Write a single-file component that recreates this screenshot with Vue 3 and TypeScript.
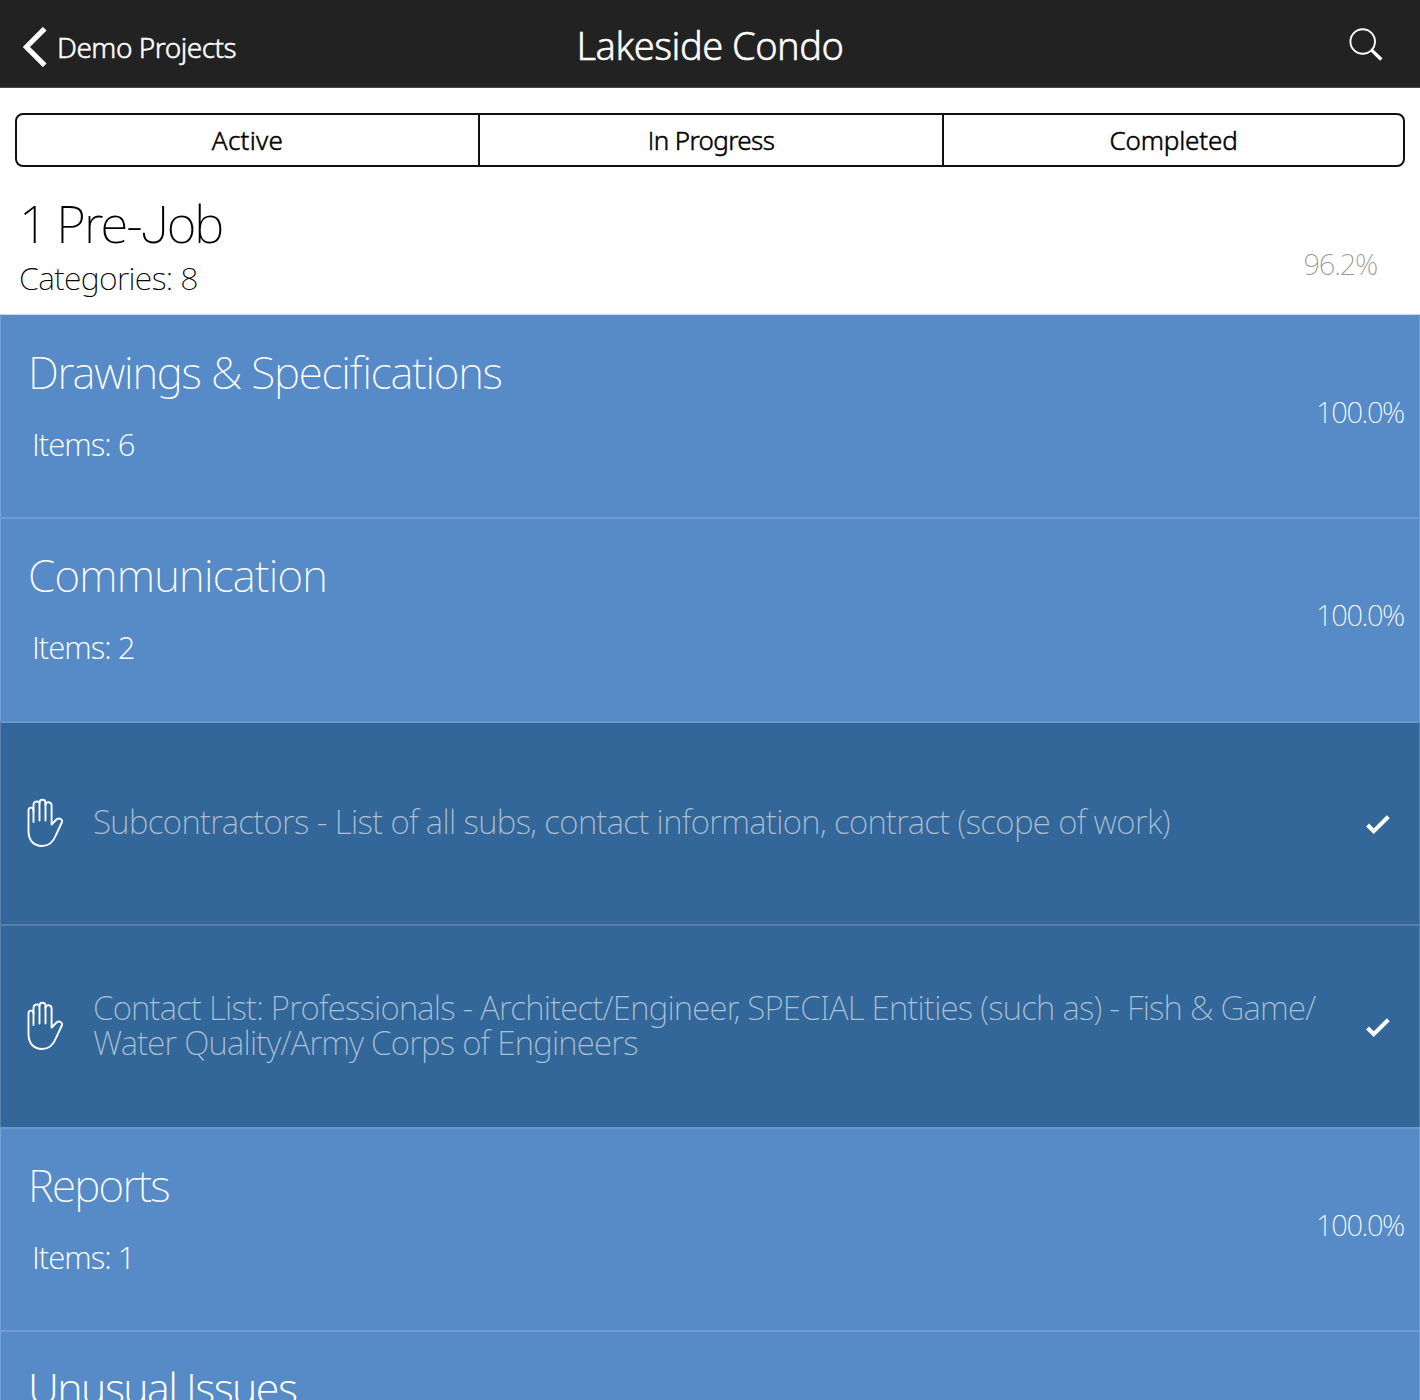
<script setup lang="ts">
interface Category { kind: 'category'; title: string; items?: number; percent?: string; cls: string }
interface Task { kind: 'task'; lines: string[]; cls: string }

const rows: (Category | Task)[] = [
  { kind: 'category', title: 'Drawings & Specifications', items: 6, percent: '100.0%', cls: 'drawings' },
  { kind: 'category', title: 'Communication', items: 2, percent: '100.0%', cls: 'communication' },
  { kind: 'task', lines: ['Subcontractors - List of all subs, contact information, contract (scope of work)'], cls: 'subs' },
  {
    kind: 'task',
    lines: [
      'Contact List: Professionals - Architect/Engineer, SPECIAL Entities (such as) - Fish & Game/',
      'Water Quality/Army Corps of Engineers',
    ],
    cls: 'contacts',
  },
  { kind: 'category', title: 'Reports', items: 1, percent: '100.0%', cls: 'reports' },
  { kind: 'category', title: 'Unusual Issues', cls: 'issues' },
]
</script>

<template>
  <div class="screen">
    <header class="bar">
      <a class="back">
        <svg width="24" height="40" viewBox="0 0 24 40"><path d="M21.7 1.7 3.4 20 21.7 38.3" fill="none" stroke="#fff" stroke-width="5.2" /></svg>
        <span>Demo Projects</span>
      </a>
      <h1>Lakeside Condo</h1>
      <svg class="search" width="36" height="36" viewBox="0 0 36 36">
        <circle cx="14.7" cy="14.5" r="12.3" fill="none" stroke="#fff" stroke-width="1.9" />
        <path d="M23.6 23.1 33.3 32.5" stroke="#fff" stroke-width="3.4" />
      </svg>
    </header>

    <nav class="tabs">
      <button class="active">Active</button>
      <button class="progress"><span class="plain">I</span>n Progress</button>
      <button class="completed">Completed</button>
    </nav>

    <section class="phase">
      <div>
        <h2>1 Pre-<span class="jay">J</span>ob</h2>
        <p>Categories: 8</p>
      </div>
      <span class="total">96.2%</span>
    </section>

    <ul class="list">
      <li v-for="(row, i) in rows" :key="i" :class="['row', row.kind, row.cls]">
        <template v-if="row.kind === 'category'">
          <div>
            <h3>{{ row.title }}</h3>
            <p v-if="row.items">Items: {{ row.items }}</p>
          </div>
          <span v-if="row.percent" class="percent">{{ row.percent }}</span>
        </template>
        <template v-else>
          <svg class="hand" width="38" height="50" viewBox="0 0 38 50" fill="none" stroke="#fff" stroke-width="1.9" stroke-linecap="round" stroke-linejoin="round">
            <path d="M7.5 24V12.500C7.500 8.300 2.500 9 2.500 12.500V33C2.500 43 8.500 48 16 48C23.500 48 27.500 43.500 30 37L35.800 24.500C37 21.200 33 19.500 30.500 21.500L25.600 26.500V7.500C25.600 3.300 19.500 3.300 19.500 6.500V22.500" />
            <path d="M13.500 22.500V5.500C13.500 2.500 7.500 2.500 7.500 7V13" />
            <path d="M13.500 5C13.500 .6 19.500 .6 19.500 5V7" />
          </svg>
          <p class="text"><span v-for="line in row.lines" :key="line">{{ line }}</span></p>
          <svg class="check" width="26" height="22" viewBox="0 0 26 22"><path d="M2.600 11 8.700 17.200 23.300 2.800" fill="none" stroke="#fff" stroke-width="4.100" /></svg>
        </template>
      </li>
    </ul>
  </div>
</template>

<style>
body { margin: 0; background: #fff; }
</style>

<style scoped>
.screen {
  width: 1420px;
  height: 1400px;
  overflow: hidden;
  background: #fff;
  font-family: "Noto Sans", "Open Sans", sans-serif;
  font-feature-settings: "liga" 1;
}
h1, h2, h3, p, ul { margin: 0; padding: 0; font-weight: inherit; }
.plain { font-family: "Open Sans", sans-serif; }
.jay { font-family: Roboto, sans-serif; font-weight: 200; }

.bar {
  display: grid;
  grid-template-columns: 1fr auto 1fr;
  align-items: start;
  box-sizing: border-box;
  height: 88px;
  padding: 0 22px;
  background: #222;
  border-bottom: 1px solid #4a4a4a;
  color: #fff;
  font-weight: 300;
  -webkit-text-stroke: 0.5px currentColor;
}
.back { display: flex; gap: 10px; padding: 27px 0 0 1px; white-space: nowrap; }
.back span { font-size: 28px; line-height: 40px; letter-spacing: -0.5px; }
h1 { padding-top: 20px; font-size: 38px; line-height: 50px; letter-spacing: -0.5px; }
.search { justify-self: end; margin: 27px 14px 0 0; }

.tabs {
  display: grid;
  grid-template-columns: 461px 464px 1fr;
  box-sizing: border-box;
  height: 54px;
  margin: 25px 15px 0;
  border: 2px solid #111;
  border-radius: 8px;
}
.tabs button {
  padding: 0;
  border: 0;
  background: none;
  color: #000;
  font: 300 26px/48px "Noto Sans", sans-serif;
  -webkit-text-stroke: 0.5px currentColor;
}
.tabs .active { letter-spacing: 0.3px; }
.tabs .progress { letter-spacing: -0.6px; }
.tabs .completed { letter-spacing: -0.15px; }
.tabs button + button { border-left: 2px solid #111; }

.phase {
  display: flex;
  justify-content: space-between;
  box-sizing: border-box;
  height: 147px;
  padding: 27px 43px 0 19px;
  color: #000;
  font-weight: 230;
}
h2 { font-size: 51px; line-height: 58px; letter-spacing: -2px; word-spacing: -1px; }
.phase p { font-size: 32px; line-height: 45px; letter-spacing: -0.65px; }
.total { padding-top: 50px; color: #999; font-size: 29px; line-height: 40px; font-weight: 200; letter-spacing: -1.2px; }

.list { list-style: none; }
.row {
  display: flex;
  box-sizing: border-box;
  height: 203.25px;
  border: 1px solid #76a2d3;
  border-top: 2px solid #6e9cd0;
  border-bottom: 0;
  color: #fff;
}
.row.drawings { border-top: 1px solid #c9daee; padding-top: 30px; }
.category { justify-content: space-between; padding: 29px 15px 0 27px; background: #568bc7; }
h3 { font-size: 44px; line-height: 54px; font-weight: 230; letter-spacing: -1.18px; white-space: nowrap; }
.communication h3 { letter-spacing: -0.75px; }
.reports h3 { letter-spacing: -1.7px; }
.issues h3 { font-family: "Open Sans", sans-serif; font-size: 43px; font-weight: 300; letter-spacing: -1.6px; }
.category p { margin: 25px 0 0 4px; font: 300 31px/40px "Open Sans", sans-serif; letter-spacing: -0.95px; }
.percent { padding-top: 47px; font-size: 29px; line-height: 40px; font-weight: 250; letter-spacing: -1.35px; }

.task { align-items: center; padding: 0 28px 3px 25px; background: #336799; border-color: #5581ac; }
.communication + .task, .task + .category { border-top-color: #6a98cb; }
.hand { margin-top: 3px; flex: none; }
.text {
  display: flex;
  flex-direction: column;
  flex: 1;
  margin-left: 29px;
  color: rgba(255, 255, 255, 0.6);
  font-size: 33px;
  line-height: 35.3px;
  font-weight: 200;
  letter-spacing: -0.6px;
  white-space: nowrap;
}
.contacts .text { letter-spacing: -0.73px; }
.check { margin-top: 7px; flex: none; }
</style>
